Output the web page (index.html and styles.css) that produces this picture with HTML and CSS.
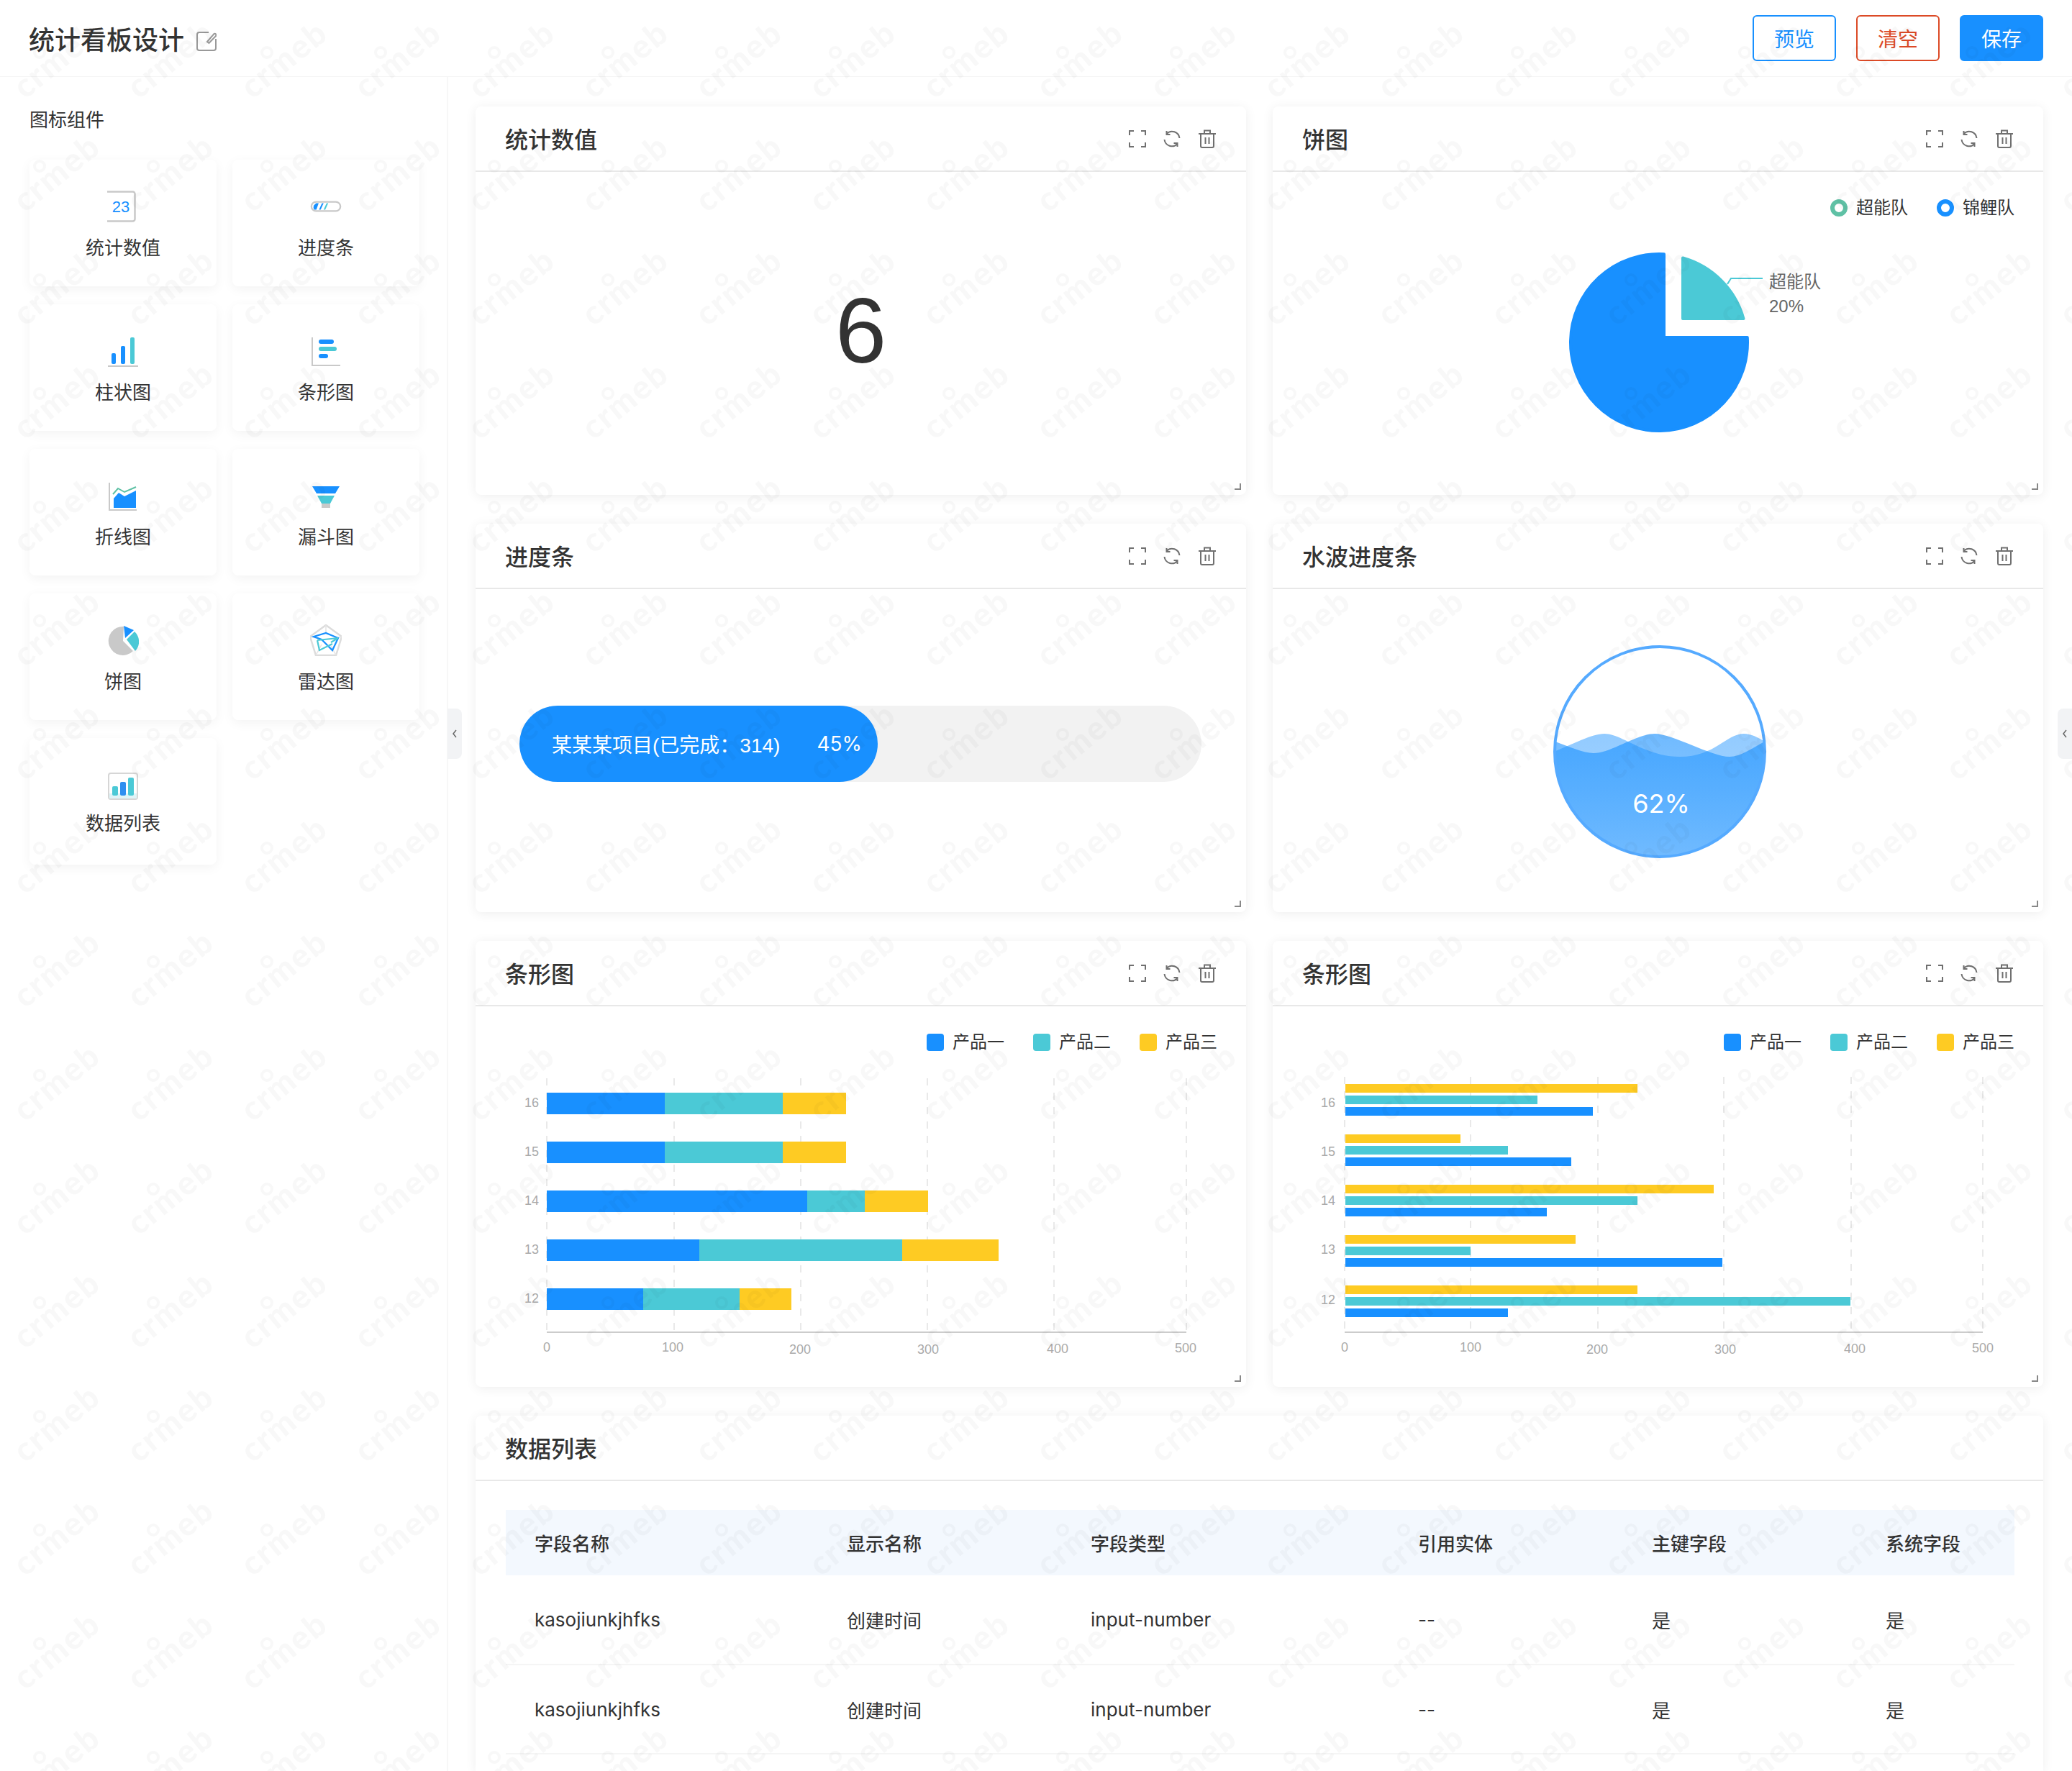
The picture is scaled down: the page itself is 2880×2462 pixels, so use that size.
FILE: index.html
```html
<!DOCTYPE html>
<html lang="zh-CN">
<head>
  <meta charset="UTF-8">
  <title>统计看板设计</title>
  <link rel="stylesheet" href="styles.css">
</head>
<body>
  <svg class="defs">
    <defs>
      <symbol id="i-expand" viewBox="0 0 24 24">
        <path d="M1 7V1H7M17 1H23V7M23 17V23H17M7 23H1V17" fill="none" stroke="currentColor" stroke-width="2"/>
      </symbol>
      <symbol id="i-refresh" viewBox="0 0 24 24">
        <path d="M22.500 11A10.500 10.500 0 0 0 4.500 5M4.500 1V6H9.500M1.500 13A10.500 10.500 0 0 0 19.500 19M19.500 23V18H14.500" fill="none" stroke="currentColor" stroke-width="2"/>
      </symbol>
      <symbol id="i-trash" viewBox="0 0 26 26">
        <path d="M1 6H25M9 6V1.500H17V6M4 6V23A2 2 0 0 0 6 25H20A2 2 0 0 0 22 23V6M10.500 11V20M15.500 11V20" fill="none" stroke="currentColor" stroke-width="2"/>
      </symbol>
    </defs>
  </svg>

  <header class="topbar">
    <div class="topbar-title">
      <h1>统计看板设计</h1>
      <svg class="edit-icon" viewBox="0 0 28 28">
        <path d="M17 2H4A3 3 0 0 0 1 5V24A3 3 0 0 0 4 27H24A3 3 0 0 0 27 24V11" fill="none" stroke="#999" stroke-width="2"/>
        <path d="M15 15L24.500 4A2 2 0 0 1 27 7L17.500 17Z" fill="none" stroke="#999" stroke-width="2"/>
      </svg>
    </div>
    <div class="topbar-actions">
      <button class="btn btn-preview">预览</button>
      <button class="btn btn-clear">清空</button>
      <button class="btn btn-save">保存</button>
    </div>
  </header>

  <div class="layout">
    <aside class="sidebar">
      <h2 class="sidebar-title">图标组件</h2>
      <div class="widget-grid">
        <div class="widget">
          <svg class="widget-icon" viewBox="4 0 44 44">
            <rect x="1.500" y="1.500" width="41" height="41" rx="3" fill="#fff" stroke="#c9c9c9" stroke-width="2.500"/>
            <text x="23" y="30" text-anchor="middle" class="icon-num">23</text>
          </svg>
          <span>统计数值</span>
        </div>
        <div class="widget">
          <svg class="widget-icon" viewBox="0 0 48 44">
            <rect x="2" y="15" width="44" height="14" rx="7" fill="#fff" stroke="#c9c9c9" stroke-width="2.500"/>
            <path d="M9 17H13L9.500 27H6.500Q4 24 6 20Z" fill="#1890ff"/>
            <path d="M18 17H20.500L16 27H13.500Z" fill="#1890ff"/>
            <path d="M25 17H27.500L23 27H20.500Z" fill="#4bc9d6"/>
          </svg>
          <span>进度条</span>
        </div>
        <div class="widget">
          <svg class="widget-icon" viewBox="0 -2 44 44">
            <rect x="6" y="23" width="6" height="15" rx="2" fill="#1890ff"/>
            <rect x="19" y="13" width="6" height="25" rx="2" fill="#1890ff"/>
            <rect x="32" y="1" width="6" height="37" rx="2" fill="#4bc9d6"/>
            <rect x="1" y="40" width="42" height="2" fill="#c9c9c9"/>
          </svg>
          <span>柱状图</span>
        </div>
        <div class="widget">
          <svg class="widget-icon" viewBox="0 -2 44 44">
            <path d="M3 1V40H42" fill="none" stroke="#c9c9c9" stroke-width="2"/>
            <rect x="12" y="4" width="21" height="6" rx="3" fill="#1890ff"/>
            <rect x="12" y="14" width="25" height="6" rx="3" fill="#4bc9d6"/>
            <rect x="12" y="24" width="13" height="6" rx="3" fill="#1890ff"/>
          </svg>
          <span>条形图</span>
        </div>
        <div class="widget">
          <svg class="widget-icon" viewBox="0 -3 44 44">
            <path d="M3 1V39H41" fill="none" stroke="#c9c9c9" stroke-width="2"/>
            <path d="M9 23L16 15L24 20L40 12V36H9Z" fill="#1890ff"/>
            <path d="M8 17L15 9L24 14L40 7" fill="none" stroke="#5fc1a5" stroke-width="2"/>
          </svg>
          <span>折线图</span>
        </div>
        <div class="widget">
          <svg class="widget-icon" viewBox="0 -3 44 44">
            <path d="M3 6H41L35 16H9Z" fill="#1890ff"/>
            <path d="M10 19H34L28 30H16Z" fill="#4bc9d6"/>
            <rect x="16" y="30" width="12" height="6" fill="#c9c9c9"/>
          </svg>
          <span>漏斗图</span>
        </div>
        <div class="widget">
          <svg class="widget-icon" viewBox="0 0 44 44">
            <path d="M23 3A20 20 0 1 0 36 37L22 23Z" fill="#c9c9c9"/>
            <path d="M23 2L37 8L25 19Z" fill="#1890ff"/>
            <path d="M27 21L38 10A19 19 0 0 1 39 37Z" fill="#4bc9d6"/>
          </svg>
          <span>饼图</span>
        </div>
        <div class="widget">
          <svg class="widget-icon" viewBox="1 1 44 44">
            <path d="M23 2L45 18L37 44H9L1 18Z" fill="none" stroke="#dcdcdc" stroke-width="2.500"/>
            <path d="M23 2V13M45 18L32 21M37 44L29 29M9 44L17 29M1 18L14 21" stroke="#e4e4e4" stroke-width="1.500"/>
            <path d="M6 18L23 13L40 20L32 37L17 22Z" fill="none" stroke="#1890ff" stroke-width="2.200"/>
            <path d="M11 23L40 20L30 26M11 23L14 37L32 28" fill="none" stroke="#4bc9d6" stroke-width="2.200"/>
          </svg>
          <span>雷达图</span>
        </div>
        <div class="widget">
          <svg class="widget-icon" viewBox="0 -3 44 44">
            <rect x="2" y="3" width="40" height="36" rx="3" fill="#fff" stroke="#d6d6d6" stroke-width="2"/>
            <rect x="3" y="31" width="38" height="7" fill="#dff4f7"/>
            <rect x="7" y="21" width="8" height="13" rx="2" fill="#4bc9d6"/>
            <rect x="18" y="15" width="8" height="19" rx="2" fill="#2f8ff0"/>
            <rect x="29" y="9" width="8" height="25" rx="2" fill="#4bc9d6"/>
          </svg>
          <span>数据列表</span>
        </div>
      </div>
    </aside>

    <main class="board">
      <div class="handle handle-left"><svg viewBox="0 0 10 16"><path d="M7 3L3 8L7 13" fill="none" stroke="#666" stroke-width="1.500"/></svg></div>
      <div class="handle handle-right"><svg viewBox="0 0 10 16"><path d="M7 3L3 8L7 13" fill="none" stroke="#666" stroke-width="1.500"/></svg></div>

      <section class="panel">
        <div class="panel-head">
          <h3>统计数值</h3>
          <div class="panel-tools">
            <svg class="tool tool-expand"><use href="#i-expand"/></svg>
            <svg class="tool tool-refresh"><use href="#i-refresh"/></svg>
            <svg class="tool tool-trash"><use href="#i-trash"/></svg>
          </div>
        </div>
        <div class="panel-body stat-body"><span class="stat-value">6</span></div>
        <i class="resize-corner"></i>
      </section>

      <section class="panel">
        <div class="panel-head">
          <h3>饼图</h3>
          <div class="panel-tools">
            <svg class="tool tool-expand"><use href="#i-expand"/></svg>
            <svg class="tool tool-refresh"><use href="#i-refresh"/></svg>
            <svg class="tool tool-trash"><use href="#i-trash"/></svg>
          </div>
        </div>
        <div class="panel-body">
          <div class="legend">
            <span class="legend-item"><i class="ring ring-green"></i>超能队</span>
            <span class="legend-item"><i class="ring ring-blue"></i>锦鲤队</span>
          </div>
          <svg class="chart pie-chart" viewBox="0 0 1071 360">
            <path d="M544 151V35.200A123 123 0 1 0 659.800 151Z" fill="#1890ff" stroke="#1890ff" stroke-width="4" stroke-linejoin="round"/>
            <path d="M570 125V40.500A122 122 0 0 1 654.500 125Z" fill="#4bc9d6" stroke="#4bc9d6" stroke-width="4" stroke-linejoin="round"/>
            <path d="M632 77L637 69H681" fill="none" stroke="#4bc9d6" stroke-width="2"/>
            <text x="690" y="82" class="pie-label">超能队</text>
            <text x="690" y="116" class="pie-label">20%</text>
          </svg>
        </div>
        <i class="resize-corner"></i>
      </section>

      <section class="panel">
        <div class="panel-head">
          <h3>进度条</h3>
          <div class="panel-tools">
            <svg class="tool tool-expand"><use href="#i-expand"/></svg>
            <svg class="tool tool-refresh"><use href="#i-refresh"/></svg>
            <svg class="tool tool-trash"><use href="#i-trash"/></svg>
          </div>
        </div>
        <div class="panel-body progress-body">
          <div class="progress-track">
            <div class="progress-fill">
              <span>某某某项目(已完成：314)</span>
              <span class="num">45%</span>
            </div>
          </div>
        </div>
        <i class="resize-corner"></i>
      </section>

      <section class="panel">
        <div class="panel-head">
          <h3>水波进度条</h3>
          <div class="panel-tools">
            <svg class="tool tool-expand"><use href="#i-expand"/></svg>
            <svg class="tool tool-refresh"><use href="#i-refresh"/></svg>
            <svg class="tool tool-trash"><use href="#i-trash"/></svg>
          </div>
        </div>
        <div class="panel-body liquid-body">
          <svg class="liquid" viewBox="0 0 300 300">
            <defs>
              <clipPath id="liquid-clip"><circle cx="150" cy="150" r="146"/></clipPath>
              <linearGradient id="wave-back" x1="0" y1="0" x2="0" y2="1">
                <stop offset="0" stop-color="#1890ff" stop-opacity=".47"/>
                <stop offset="1" stop-color="#1890ff" stop-opacity=".33"/>
              </linearGradient>
              <linearGradient id="wave-front" x1="0" y1="0" x2="0" y2="1">
                <stop offset="0" stop-color="#1890ff" stop-opacity=".62"/>
                <stop offset="1" stop-color="#1890ff" stop-opacity=".42"/>
              </linearGradient>
            </defs>
            <g clip-path="url(#liquid-clip)">
              <path d="M-24 157C0 157 48 125 73 125S129 157 178 157S242 125 267 125S315 157 340 157V300H-24Z" fill="url(#wave-back)"/>
              <path d="M-36 125C-10 125 34 152 58 152S118 125 143 125S222 157 247 157S300 125 330 125V300H-36Z" fill="url(#wave-front)"/>
            </g>
            <circle cx="150" cy="150" r="146" fill="none" stroke="#55aaff" stroke-width="4"/>
            <text x="152" y="235" text-anchor="middle" class="liquid-text">62%</text>
          </svg>
        </div>
        <i class="resize-corner"></i>
      </section>

      <section class="panel">
        <div class="panel-head">
          <h3>条形图</h3>
          <div class="panel-tools">
            <svg class="tool tool-expand"><use href="#i-expand"/></svg>
            <svg class="tool tool-refresh"><use href="#i-refresh"/></svg>
            <svg class="tool tool-trash"><use href="#i-trash"/></svg>
          </div>
        </div>
        <div class="panel-body">
          <div class="legend">
            <span class="legend-item"><i class="swatch bar-blue"></i>产品一</span>
            <span class="legend-item"><i class="swatch bar-teal"></i>产品二</span>
            <span class="legend-item"><i class="swatch bar-yellow"></i>产品三</span>
          </div>
          <svg class="chart" viewBox="0 0 1071 440">
            <g class="grid">
              <path d="M99 20V373M276 20V373M452 20V373M628 20V373M804 20V373M988 20V373"/>
            </g>
            <path class="axis" d="M99 373H988"/>
            <rect class="bar-blue" x="99" y="40" width="164" height="30"/><rect class="bar-teal" x="263" y="40" width="164" height="30"/><rect class="bar-yellow" x="427" y="40" width="88" height="30"/>
            <rect class="bar-blue" x="99" y="108" width="164" height="30"/><rect class="bar-teal" x="263" y="108" width="164" height="30"/><rect class="bar-yellow" x="427" y="108" width="88" height="30"/>
            <rect class="bar-blue" x="99" y="176" width="362" height="30"/><rect class="bar-teal" x="461" y="176" width="80" height="30"/><rect class="bar-yellow" x="541" y="176" width="88" height="30"/>
            <rect class="bar-blue" x="99" y="244" width="212" height="30"/><rect class="bar-teal" x="311" y="244" width="282" height="30"/><rect class="bar-yellow" x="593" y="244" width="134" height="30"/>
            <rect class="bar-blue" x="99" y="312" width="134" height="30"/><rect class="bar-teal" x="233" y="312" width="134" height="30"/><rect class="bar-yellow" x="367" y="312" width="72" height="30"/>
            <g class="tick tick-y">
              <text x="88" y="60">16</text><text x="88" y="128">15</text><text x="88" y="196">14</text><text x="88" y="264">13</text><text x="88" y="332">12</text>
            </g>
            <g class="tick tick-x">
              <text x="99" y="400">0</text><text x="274" y="400">100</text><text x="451" y="403">200</text><text x="629" y="403">300</text><text x="809" y="402">400</text><text x="987" y="401">500</text>
            </g>
          </svg>
        </div>
        <i class="resize-corner"></i>
      </section>

      <section class="panel">
        <div class="panel-head">
          <h3>条形图</h3>
          <div class="panel-tools">
            <svg class="tool tool-expand"><use href="#i-expand"/></svg>
            <svg class="tool tool-refresh"><use href="#i-refresh"/></svg>
            <svg class="tool tool-trash"><use href="#i-trash"/></svg>
          </div>
        </div>
        <div class="panel-body">
          <div class="legend">
            <span class="legend-item"><i class="swatch bar-blue"></i>产品一</span>
            <span class="legend-item"><i class="swatch bar-teal"></i>产品二</span>
            <span class="legend-item"><i class="swatch bar-yellow"></i>产品三</span>
          </div>
          <svg class="chart" viewBox="0 0 1071 440">
            <g class="grid">
              <path d="M100 18V373M275 18V373M452 18V373M627 18V373M804 18V373M987 18V373"/>
            </g>
            <path class="axis" d="M100 373H987"/>
            <rect class="bar-yellow" x="101" y="28" width="406" height="12"/><rect class="bar-teal" x="101" y="44" width="267" height="12"/><rect class="bar-blue" x="101" y="60" width="344" height="12"/>
            <rect class="bar-yellow" x="101" y="98" width="160" height="12"/><rect class="bar-teal" x="101" y="114" width="226" height="12"/><rect class="bar-blue" x="101" y="130" width="314" height="12"/>
            <rect class="bar-yellow" x="101" y="168" width="512" height="12"/><rect class="bar-teal" x="101" y="184" width="406" height="12"/><rect class="bar-blue" x="101" y="200" width="280" height="12"/>
            <rect class="bar-yellow" x="101" y="238" width="320" height="12"/><rect class="bar-teal" x="101" y="254" width="174" height="12"/><rect class="bar-blue" x="101" y="270" width="524" height="12"/>
            <rect class="bar-yellow" x="101" y="308" width="406" height="12"/><rect class="bar-teal" x="101" y="324" width="702" height="12"/><rect class="bar-blue" x="101" y="340" width="226" height="12"/>
            <g class="tick tick-y">
              <text x="87" y="60">16</text><text x="87" y="128">15</text><text x="87" y="196">14</text><text x="87" y="264">13</text><text x="87" y="334">12</text>
            </g>
            <g class="tick tick-x">
              <text x="100" y="400">0</text><text x="275" y="400">100</text><text x="451" y="403">200</text><text x="629" y="403">300</text><text x="809" y="402">400</text><text x="987" y="401">500</text>
            </g>
          </svg>
        </div>
        <i class="resize-corner"></i>
      </section>

      <section class="panel panel-wide">
        <div class="panel-head">
          <h3>数据列表</h3>
        </div>
        <div class="panel-body table-body">
          <table class="data-table">
            <thead>
              <tr>
                <th class="col-name">字段名称</th>
                <th class="col-label">显示名称</th>
                <th class="col-type">字段类型</th>
                <th class="col-ref">引用实体</th>
                <th class="col-key">主键字段</th>
                <th>系统字段</th>
              </tr>
            </thead>
            <tbody>
              <tr>
                <td>kasojiunkjhfks</td><td>创建时间</td><td>input-number</td><td>--</td><td>是</td><td>是</td>
              </tr>
              <tr>
                <td>kasojiunkjhfks</td><td>创建时间</td><td>input-number</td><td>--</td><td>是</td><td>是</td>
              </tr>
            </tbody>
          </table>
        </div>
      </section>
    </main>
  </div>

  <!-- watermark tiled over the whole page -->
  <svg class="watermark" width="2880" height="2462">
    <defs>
      <pattern id="wm" width="158" height="158" patternUnits="userSpaceOnUse">
        <g transform="rotate(-39 80 84)">
          <text x="80" y="98" text-anchor="middle" class="wm-text">crmeb</text>
        </g>
        <circle cx="55" cy="73" r="7" fill="none" stroke="#000" stroke-width="4"/>
      </pattern>
    </defs>
    <rect width="2880" height="2462" fill="url(#wm)" opacity=".028"/>
  </svg>
</body>
</html>
```

FILE: styles.css
```css
* {
  box-sizing: border-box;
}

html,
body {
  margin: 0;
  padding: 0;
}

body {
  position: relative;
  width: 2880px;
  height: 2462px;
  overflow: hidden;
  background: #fff;
  color: #333;
  font-family: "Liberation Sans", "Noto Sans CJK SC", sans-serif;
}

h1,
h2,
h3 {
  margin: 0;
}

.defs {
  position: absolute;
  width: 0;
  height: 0;
}

.watermark {
  position: absolute;
  top: 0;
  left: 0;
  pointer-events: none;
}

.wm-text {
  font-family: "Lato", sans-serif;
  font-size: 46px;
  font-weight: 900;
  letter-spacing: 2px;
}

/* top bar */
.topbar {
  display: flex;
  align-items: center;
  justify-content: space-between;
  height: 107px;
  padding: 0 40px;
  border-bottom: 1px solid #f4f4f4;
}

.topbar-title {
  display: flex;
  align-items: center;
  gap: 17px;
  padding-top: 8px;
}

.topbar-title h1 {
  font-size: 36px;
  font-weight: 500;
  line-height: 44px;
}

.edit-icon {
  width: 28px;
  height: 28px;
}

.topbar-actions {
  display: flex;
  gap: 28px;
}

.btn {
  width: 116px;
  height: 64px;
  border: 2px solid #1890ff;
  border-radius: 6px;
  background: #fff;
  color: #1890ff;
  font-family: inherit;
  font-size: 28px;
}

.btn-clear {
  border-color: #dc4a26;
  color: #dc4a26;
}

.btn-save {
  background: #1890ff;
  color: #fff;
}

.layout {
  display: flex;
}

/* left widget list */
.sidebar {
  flex: none;
  width: 623px;
  height: 2355px;
  padding: 44px 0 0 41px;
  border-right: 2px solid #f7f7f7;
}

.sidebar-title {
  margin-bottom: 39px;
  font-size: 26px;
  font-weight: 400;
  line-height: 32px;
}

.widget-grid {
  display: grid;
  grid-template-columns: 260px 260px;
  grid-auto-rows: 176px;
  gap: 25px 22px;
}

.widget {
  display: flex;
  flex-direction: column;
  align-items: center;
  padding-top: 43px;
  border-radius: 8px;
  background: #fff;
  box-shadow: 0 4px 16px rgba(0, 0, 0, 0.05);
  font-size: 26px;
  line-height: 36px;
}

.widget-icon {
  flex: none;
  width: 44px;
  height: 44px;
  margin-bottom: 18px;
}

.widget:last-child .widget-icon {
  margin-bottom: 14px;
}

.icon-num {
  fill: #1890ff;
  font-size: 22px;
}

/* board */
.board {
  position: relative;
  flex: 1;
  display: grid;
  grid-template-columns: 1fr 1fr;
  grid-template-rows: 540px 540px 620px 494px;
  gap: 40px 37px;
  padding: 41px 40px 0 38px;
}

.handle {
  position: absolute;
  top: 878px;
  display: flex;
  align-items: center;
  justify-content: center;
  width: 20px;
  height: 70px;
  background: #f2f3f5;
}

.handle svg {
  width: 10px;
  height: 16px;
}

.handle-left {
  left: -1px;
  border-radius: 0 8px 8px 0;
}

.handle-right {
  right: 0;
  border-radius: 8px 0 0 8px;
}

.panel {
  position: relative;
  display: flex;
  flex-direction: column;
  border-radius: 8px;
  background: #fff;
  box-shadow: 0 2px 16px rgba(0, 0, 0, 0.07);
}

.panel-wide {
  grid-column: 1 / 3;
  border-radius: 8px 8px 0 0;
}

.panel-head {
  flex: none;
  display: flex;
  align-items: center;
  justify-content: space-between;
  height: 91px;
  padding: 0 41px;
  border-bottom: 2px solid #e8e8e8;
}

.panel-head h3 {
  margin-bottom: 2px;
  font-size: 32px;
  font-weight: 500;
}

.panel-tools {
  display: flex;
  align-items: center;
  gap: 24px;
}

.tool {
  display: block;
  width: 24px;
  height: 24px;
  color: #707070;
}

.tool-trash {
  width: 26px;
  height: 26px;
}

.panel-body {
  flex: 1;
  min-height: 0;
}

.resize-corner {
  position: absolute;
  right: 7px;
  bottom: 7px;
  width: 9px;
  height: 9px;
  border-right: 2px solid #888;
  border-bottom: 2px solid #888;
}

.stat-body {
  display: flex;
  align-items: center;
  justify-content: center;
  padding-bottom: 8px;
}

.stat-value {
  font-size: 128px;
  line-height: 1;
}

.legend {
  display: flex;
  justify-content: flex-end;
  gap: 40px;
  padding: 38px 40px 0 0;
}

.legend-item {
  display: flex;
  align-items: center;
  gap: 12px;
  font-size: 24px;
  line-height: 24px;
}

.ring {
  width: 24px;
  height: 24px;
  border: 6px solid #5fc1a5;
  border-radius: 50%;
}

.ring-blue {
  border-color: #1890ff;
}

.swatch {
  width: 24px;
  height: 24px;
  border-radius: 4px;
}

.bar-blue {
  background: #1890ff;
  fill: #1890ff;
}

.bar-teal {
  background: #4bc9d6;
  fill: #4bc9d6;
}

.bar-yellow {
  background: #fecb23;
  fill: #fecb23;
}

.chart {
  display: block;
  width: 1071px;
  height: 440px;
  margin-top: 18px;
}

.pie-chart {
  height: 360px;
  margin-top: 17px;
}

.pie-label {
  fill: #666;
  font-size: 24px;
}

.grid path {
  fill: none;
  stroke: #e9e9e9;
  stroke-width: 2;
  stroke-dasharray: 10 10;
}

.axis {
  stroke: #ccc;
  stroke-width: 2;
}

.tick text {
  fill: #aaa;
  font-size: 18px;
}

.tick-y text {
  text-anchor: end;
}

.tick-x text {
  text-anchor: middle;
}

.progress-body {
  padding: 162px 62px 0 61px;
}

.progress-track {
  height: 106px;
  border-radius: 53px;
  background: #f2f2f2;
}

.progress-fill {
  display: flex;
  align-items: center;
  justify-content: space-between;
  width: 498px;
  height: 106px;
  padding: 0 22px 0 45px;
  border-radius: 53px;
  background: #1890ff;
  color: #fff;
  font-size: 28px;
}

.num {
  font-family: "Inter", sans-serif;
}

.liquid-body {
  display: flex;
  justify-content: center;
  padding: 76px 0 0 4px;
}

.liquid {
  width: 300px;
  height: 300px;
}

.liquid-text {
  fill: #fff;
  font-family: "Inter", sans-serif;
  font-size: 36px;
}

.table-body {
  padding: 40px 40px 0 42px;
}

.data-table {
  width: 100%;
  border-collapse: collapse;
  table-layout: fixed;
  font-family: "Inter", "Noto Sans CJK SC", sans-serif;
  font-size: 26px;
}

.data-table th,
.data-table td {
  padding: 0 0 0 40px;
  text-align: left;
}

.data-table th {
  height: 91px;
  background: #f3f8fe;
  font-weight: 500;
}

.data-table td {
  height: 124px;
  border-bottom: 2px solid #f5f5f5;
}

.col-name {
  width: 434px;
}

.col-label {
  width: 339px;
}

.col-type {
  width: 455px;
}

.col-ref,
.col-key {
  width: 325px;
}
```
